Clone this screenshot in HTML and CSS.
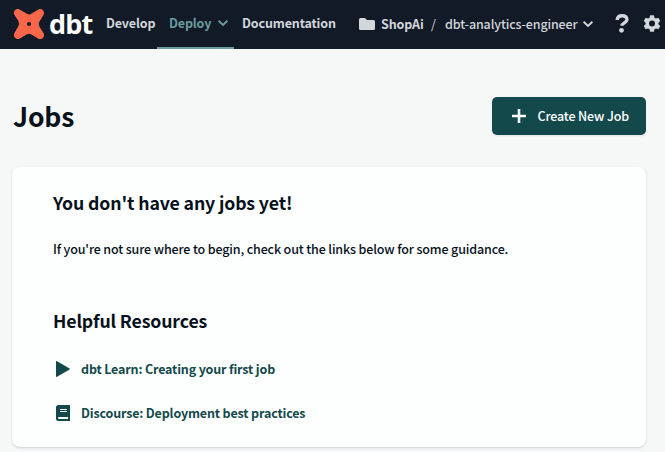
FILE: index.html
```html
<!DOCTYPE html>
<html lang="en">
<head>
<meta charset="utf-8">
<title>Jobs</title>
<link rel="stylesheet" href="styles.css">
</head>
<body>
<header class="topbar">
  <a class="brand">
    <svg class="mark" viewBox="0 0 32 32"><path fill="#f9674a" fill-rule="evenodd" d="M6.500 1.400 14 5.800Q16.500 7.400 19 5.200L25.500 1.400C29 .2 31.800 3 30.800 6.500L26.200 14Q25 16 26.600 19L30.800 25.500C31.800 29.500 29 31.800 25.500 30.800L18 26.200Q16 25 13 26.800L6.500 30.800C2.800 31.800.2 29.200 1.200 25.500L5.400 18Q6.800 16 5.400 13L1.200 6.500C.2 3 2.800.2 6.500 1.400ZM16 13.900A2.100 2.100 0 1 0 16 18.100 2.100 2.100 0 1 0 16 13.900Z"/></svg>
    <span class="wordmark">dbt</span>
  </a>
  <nav class="nav">
    <a class="link develop">Develop</a>
    <a class="link deploy active"><span class="label">Deploy</span>
      <svg class="chevron" viewBox="0 0 12 8"><path d="M1.600 1.700 6 5.900 10.400 1.700"/></svg></a>
    <a class="link docs">Documentation</a>
  </nav>
  <div class="project">
    <svg class="folder" viewBox="0 0 16 13"><path d="M1.500 0H6l2 2h6.500Q16 2 16 3.500v7Q16 12 14.500 12h-13Q0 12 0 10.500V1.500Q0 0 1.500 0Z"/></svg>
    <span class="account">ShopAi</span><span class="slash">/</span><span class="name">dbt-analytics-engineer</span>
    <svg class="chevron" viewBox="0 0 12 8"><path d="M1.600 1.700 6 5.900 10.400 1.700"/></svg>
  </div>
  <svg class="help" viewBox="0 0 14 19"><path d="M2.200 6C2.400 3.200 4.200 1.800 7 1.800c3 0 4.900 1.400 4.900 3.900 0 3.300-4.900 3-4.900 6.100" fill="none" stroke="#d3d6db" stroke-width="3.400"/><circle cx="6.500" cy="16.300" r="2.400" fill="#d3d6db"/></svg>
  <svg class="gear" viewBox="0 0 24 24"><path fill-rule="evenodd" d="M9.500 1h5l.8 3.200 2 1.200 3.200-1L23 8.700l-2.400 2.300v2l2.400 2.300-2.500 4.300-3.200-1-2 1.200-.8 3.200h-5l-.8-3.200-2-1.200-3.200 1L1 15.300 3.400 13v-2L1 8.700l2.500-4.300 3.200 1 2-1.200ZM12 8a4 4 0 1 0 0 8 4 4 0 1 0 0-8Z"/></svg>
</header>
<main class="page">
  <div class="heading">
    <h1>Jobs</h1>
    <button class="create"><svg class="plus" viewBox="0 0 14 14"><path d="M7 0V14M0 7H14"/></svg><span>Create New Job</span></button>
  </div>
  <section class="card">
    <h2 class="empty">You don't have any jobs yet!</h2>
    <p>If you're not sure where to begin, check out the links below for some guidance.</p>
    <h2 class="resources">Helpful Resources</h2>
    <a class="resource learn"><svg viewBox="0 0 14 16"><path d="M0 1Q0-.5 1.500.4L13.200 7.300Q14.300 8 13.200 8.700L1.500 15.600Q0 16.500 0 15Z"/></svg><span>dbt Learn: Creating your first job</span></a>
    <a class="resource discourse"><svg viewBox="0 0 14 16"><path fill-rule="evenodd" d="M2.500 0H14V16H2.500Q0 16 0 13.500v-11Q0 0 2.500 0ZM4 4v1h7V4ZM4 6v1h7v-1ZM3 12q-1 0-1 1t1 1h9v-2Z"/></svg><span>Discourse: Deployment best practices</span></a>
  </section>
</main>
</body>
</html>
```
FILE: styles.css
```css
* { box-sizing: border-box; }
body {
  margin: 0;
  height: 452px;
  overflow: hidden;
  background: #f6f8f8;
  color: #06111b;
  font-family: "Noto Sans CJK SC", "Open Sans", sans-serif;
  font-size: 12.5px;
  letter-spacing: -.14px;
}
svg { display: block; flex: none; }
span { white-space: nowrap; }
.topbar {
  display: flex;
  height: 49px;
  background: #121a27;
  color: #d3d6db;
  line-height: 20px;
}
.brand { display: flex; width: 106px; padding-left: 13px; }
.mark { width: 32px; height: 32px; margin-top: 8px; }
.wordmark {
  margin: 9px 0 0 4px;
  color: #fff;
  font: 700 27px/30px "Open Sans", sans-serif;
  letter-spacing: -.8px;
}
.nav { display: flex; font-weight: 700; }
.link { height: 49px; padding-top: 13px; white-space: nowrap; }
.develop { width: 51px; }
.deploy { display: flex; width: 77px; padding-left: 12px; }
.active { color: #699b9f; border-bottom: 2px solid #699b9f; }
.deploy .label { width: 42px; }
.chevron { width: 12px; height: 8px; margin: 6px 0 0 6px; fill: none; stroke: currentColor; stroke-width: 1.9; }
.docs { width: 125px; padding-left: 8px; }
.project { display: flex; width: 256px; padding-top: 14px; }
.folder { width: 16px; height: 13px; margin: 4px 6px 0 0; fill: #d3d6db; }
.account { width: 50px; font-weight: 700; }
.slash { width: 14px; }
.name { width: 132px; font-weight: 500; letter-spacing: -.14px; }
.project .chevron { margin-left: 5px; }
.help { width: 14px; height: 19px; margin-top: 14px; }
.gear { width: 18px; height: 19px; margin: 14px 0 0 14px; fill: #d3d6db; }
.page { padding: 48px 19px 0 12px; }
.heading { display: flex; justify-content: space-between; height: 70px; }
h1, h2, p { margin: 0; white-space: nowrap; }
h1 { margin-top: -1px; padding-left: 1px; font-size: 26.5px; line-height: 40px; }
.create {
  display: flex;
  align-items: center;
  width: 154px;
  height: 38px;
  padding: 0 0 0 20px;
  border: 0;
  border-radius: 5px;
  background: #14494c;
  color: #fff;
  font: 500 12.5px/20px "Noto Sans CJK SC", sans-serif;
  letter-spacing: -.14px;
  box-shadow: 0 1px 2px #dfe4e5;
}
.plus { width: 14px; height: 14px; margin-right: 11.5px; stroke: #fff; stroke-width: 2.6; }
.card {
  height: 280px;
  padding: 20px 0 0 41px;
  border-radius: 8px;
  background: #fdfefe;
  box-shadow: 0 1px 1px #d4d7dc, 0 1px 3px 1px #e9ebee;
}
h2 { font-size: 17.7px; line-height: 30px; }
p { margin-top: 22px; font-weight: 500; line-height: 20px; }
.resources { margin-top: 46px; }
.resource { display: flex; align-items: center; height: 20px; color: #14494c; font-weight: 700; line-height: 20px; letter-spacing: -.16px; }
.resource svg { width: 14px; height: 16px; margin: 0 11px 0 3px; fill: #14494c; }
.learn { margin-top: 24px; }
.discourse { margin-top: 24px; }
```
